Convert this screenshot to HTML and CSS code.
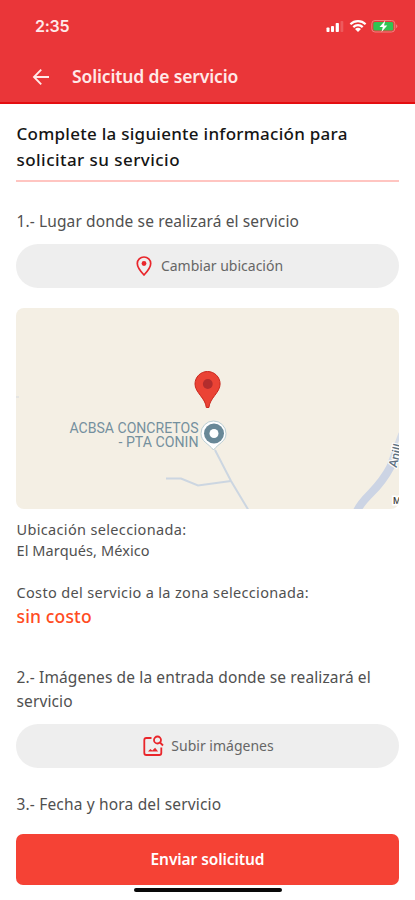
FILE: index.html
```html
<!DOCTYPE html>
<html lang="es">
<head>
<meta charset="utf-8">
<meta name="viewport" content="width=device-width, initial-scale=1">
<title>Solicitud de servicio</title>
<link rel="stylesheet" href="styles.css">
</head>
<body>
<div class="screen">
  <header class="header">
    <div class="status">
      <span class="clock">2:35</span>
      <svg class="status-icons" viewBox="0 0 74 16" width="74" height="16">
        <g fill="#fff">
          <rect x="1.500" y="9.500" width="3" height="4.500" rx=".8"/>
          <rect x="6" y="8" width="3" height="6" rx=".8"/>
          <rect x="10.700" y="5" width="3.200" height="9" rx=".8"/>
          <rect x="15.500" y="3" width="2.800" height="11" rx=".8" opacity=".18"/>
          <path d="M33 14l-3-3.100q3-2.200 6 0z"/>
        </g>
        <g fill="none" stroke="#fff" stroke-width="2.200">
          <path d="M25.400 6.200a10.900 10.900 0 0 1 15.200 0"/>
          <path d="M28.300 9.100a6.700 6.700 0 0 1 9.400 0"/>
        </g>
        <rect x="46.800" y="2.500" width="23" height="11.500" rx="3.200" fill="none" stroke="#f0807e"/>
        <rect x="48.300" y="4" width="20" height="8.500" rx="1.500" fill="#30c452"/>
        <path d="M71.300 6.200q2 2 0 4z" fill="#f29a98"/>
        <path d="M60.300 2.600L54.500 9h3.300l-1.300 5 5.800-6.400H59z" fill="#fff"/>
      </svg>
    </div>
    <div class="nav">
      <svg class="back" viewBox="0 0 18 18" width="18" height="18"><path d="M9.200 1.700L2 9l7.200 7.300M2 9h15" fill="none" stroke="#ffe9e8" stroke-width="1.900"/></svg>
      <h1 class="title">Solicitud de servicio</h1>
    </div>
  </header>

  <main class="content">
    <h2 class="intro">Complete la siguiente información para<br><span class="intro-end">solicitar su servicio</span></h2>

    <p class="step step-place">1.- Lugar donde se realizará el servicio</p>
    <button class="pill pill-place">
      <svg viewBox="0 0 16 20" width="16" height="20"><path d="M8 1C4.300 1 1.300 3.900 1.300 7.500 1.300 12 8 19 8 19s6.700-7 6.700-11.500C14.700 3.900 11.700 1 8 1z" fill="none" stroke="#e9262b" stroke-width="1.700"/><circle cx="8" cy="7.500" r="2.400" fill="#e9262b"/></svg>
      <span class="pill-text">Cambiar ubicación</span>
    </button>

    <svg class="map" viewBox="0 0 383 201" width="383" height="201">
      <rect width="383" height="201" fill="#f4efe4"/>
      <path d="M0 89h3" stroke="#d5dae0"/>
      <g fill="none" stroke="#ccd6e1" stroke-width="2">
        <path d="M199 142l16 31 18 30"/>
        <path d="M150 170.500h15l17 7 33-4.500"/>
      </g>
      <path d="M372 158l12-33" fill="none" stroke="#d5dce8" stroke-width="3"/>
      <path d="M341 203q3-7 14-18 12-12 20-27" fill="none" stroke="#ccd4e4" stroke-width="8"/>
      <g class="poi">
        <text x="53.500" y="125" textLength="129" lengthAdjust="spacingAndGlyphs">ACBSA CONCRETOS</text>
        <text x="102.500" y="139" textLength="80" lengthAdjust="spacingAndGlyphs">- PTA CONIN</text>
      </g>
      <path d="M197.500 113a12.500 12.500 0 0 0-12.500 12.500c0 8 7 9.500 12.500 16.500 5.500-7 12.500-8.500 12.500-16.500A12.500 12.500 0 0 0 197.500 113z" fill="#fff" stroke="#b9cdd2"/>
      <circle cx="198" cy="125.500" r="10" fill="#688897"/>
      <circle cx="198" cy="125.500" r="4.500" fill="#fff"/>
      <path d="M191.500 63.500c-7 0-12.500 5.500-12.500 12.500 0 8.500 10.500 14 11.300 23.500h2.600c.8-9.500 11.200-15 11.200-23.500 0-7-5.600-12.500-12.600-12.500z" fill="#ea4335" stroke="#c9271d"/>
      <circle cx="191.800" cy="76" r="4.900" fill="#b22d2d"/>
      <text class="road" transform="translate(380.500 160) rotate(-76)">Anill</text>
      <text class="road-small" x="377" y="196">M</text>
    </svg>

    <p class="detail detail-place">Ubicación seleccionada:</p>
    <p class="detail detail-city">El Marqués, México</p>
    <p class="detail detail-cost">Costo del servicio a la zona seleccionada:</p>
    <p class="cost">sin costo</p>

    <p class="step step-images">2.- Imágenes de la entrada donde se realizará el<br>servicio</p>
    <button class="pill pill-images">
      <svg viewBox="0 0 22 22" width="22" height="22"><g fill="none" stroke="#e9262b" stroke-width="1.800"><path d="M9.500 3H4.300Q2.300 3 2.300 5v13q0 2 2 2h13q2 0 2-2v-5.500"/><circle cx="15.500" cy="5" r="3.500"/><path d="M18 7.500l3 3"/></g><path d="M6 16.500l2.300-2.600 2 1.600 2.800-2.700 3 3.700z" fill="#e9262b"/></svg>
      <span class="pill-text">Subir imágenes</span>
    </button>
    <p class="step step-date">3.- Fecha y hora del servicio</p>
  </main>

  <footer class="footer">
    <button class="submit"><span>Enviar solicitud</span></button>
    <div class="home-bar"></div>
  </footer>
</div>
</body>
</html>
```
FILE: styles.css
```css
* { box-sizing: border-box; }
body { margin: 0; background: #fff; font-family: "Noto Sans", sans-serif; color: #505050; }
h1, h2, p { margin: 0; white-space: nowrap; }
button { border: 0; padding: 0; font: inherit; color: inherit; }
svg { display: block; flex: none; }

.screen { width: 415px; height: 900px; overflow: hidden; display: flex; flex-direction: column; }

.header { height: 104px; flex: none; background: #ea3639; border-bottom: 2px solid #e40d10; color: #fff; }
.status { height: 51px; padding: 0 16px 0 35px; display: flex; align-items: center; justify-content: space-between; }
.clock { font: 600 16px/20px Inter, sans-serif; letter-spacing: -.25px; color: #ffe9e8; }
.nav { height: 51px; padding-left: 32px; display: flex; align-items: center; gap: 22px; }
.title { font-size: 17.500px; font-weight: 600; line-height: 24px; letter-spacing: -.14px; color: #ffe9e8; padding-bottom: 2px; }

.content { flex: 1; padding: 17px 16px 0; }
.intro { height: 61px; border-bottom: 2px solid #ffc5c1; font-size: 17px; font-weight: 500; line-height: 26px; letter-spacing: .26px; padding-left: .5px; color: #151515; }
.intro-end { letter-spacing: .45px; }

.step { padding-left: .5px; font-size: 15.500px; line-height: 25px; letter-spacing: .12px; }
.step-place { margin: 27px 0 10px; }
.pill { width: 383px; height: 44px; border-radius: 22px; background: #eee; display: flex; align-items: center; justify-content: center; }
.pill-place { gap: 9px; padding-left: 4px; }
.pill-images { gap: 7px; padding-left: 1px; }
.pill-text { font-size: 14px; line-height: 20px; color: #666; }
.map { margin-top: 20px; border-radius: 8px; }
.poi { font: 400 14px Roboto, sans-serif; fill: #74909e; }
.road { font: 500 12px Roboto, sans-serif; fill: #5d7080; stroke: #fff; stroke-width: 2px; paint-order: stroke; }
.road-small { font: 500 9px Roboto, sans-serif; fill: #444; stroke: #fff; stroke-width: 3px; paint-order: stroke; }

.detail { padding-left: .5px; font-size: 14.500px; line-height: 21px; letter-spacing: .34px; }
.detail-place { margin-top: 10px; }
.detail-city { letter-spacing: .1px; }
.detail-cost { margin-top: 21px; }
.cost { margin-top: 1px; padding-left: .5px; font-size: 17.500px; font-weight: 500; line-height: 25px; letter-spacing: .15px; color: #ff4b22; }

.step-images { margin: 36px 0 11px; line-height: 24px; }
.step-date { margin-top: 24px; letter-spacing: .17px; }

.footer { height: 66px; flex: none; padding: 0 16px; display: flex; flex-direction: column; align-items: center; }
.submit { width: 383px; height: 51px; border-radius: 7px; background: #f54235; color: #fff; font-size: 15.500px; font-weight: 600; letter-spacing: -.08px; }
.submit span { display: block; padding-bottom: 1px; }
.home-bar { width: 148px; height: 4px; margin-top: 3px; border-radius: 2px; background: #090909; }
```
